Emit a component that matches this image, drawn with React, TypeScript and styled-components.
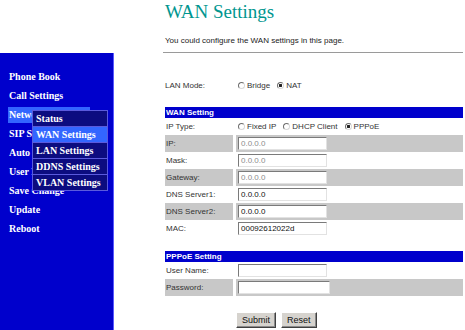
import styled, { createGlobalStyle } from 'styled-components';

const GlobalStyle = createGlobalStyle`
  body {
    margin: 0;
    background: #ffffff;
    font-family: "Liberation Sans", Arial, sans-serif;
  }
`;

const Page = styled.div`
  display: grid;
  grid-template-columns: 114px 1fr;
  width: 465px;
  height: 330px;
  overflow: hidden;
`;

const Sidebar = styled.nav`
  position: relative;
  margin-top: 53px;
  background: #0000cc;
  border-right: 1px solid #5a5aff;
  padding-top: 16px;
  font-family: "Liberation Serif", "Times New Roman", serif;
  font-weight: bold;
  font-size: 10px;
  color: #ffffff;
`;

const MenuItem = styled.div<{ $active?: boolean }>`
  width: 81px;
  height: 16px;
  line-height: 16px;
  margin: 0 0 3px 8px;
  padding-left: 1px;
  white-space: nowrap;
  overflow: hidden;
  background: ${(p) => (p.$active ? '#3366ff' : 'transparent')};
`;

const Dropdown = styled.div`
  position: absolute;
  left: 32px;
  top: 57px;
  width: 74px;
  background: #0c0c80;
  border: 1px solid #5a5add;
`;

const DropItem = styled.div<{ $active?: boolean }>`
  height: 15px;
  line-height: 15px;
  padding-left: 3px;
  border-top: 1px solid #5a5add;
  background: ${(p) => (p.$active ? '#3366ff' : 'transparent')};
  &:first-child {
    border-top: none;
  }
`;

const Main = styled.main`
  padding: 0 2px 0 49px;
  color: #333333;
  font-size: 8px;
`;

const Title = styled.h1`
  margin: 0;
  padding-left: 2px;
  height: 30px;
  line-height: 24px;
  font-family: "Liberation Serif", "Times New Roman", serif;
  font-weight: normal;
  font-size: 19px;
  color: #00968f;
`;

const Intro = styled.p`
  margin: 0;
  padding-left: 2px;
  height: 22px;
  line-height: 22px;
  color: #222222;
`;

const Rule = styled.div`
  border-top: 1px solid #9a9a9a;
  margin-bottom: 24px;
`;

const Section = styled.section<{ $gap?: number }>`
  margin-left: 2px;
  margin-bottom: ${(p) => p.$gap ?? 0}px;
`;

const ModeRow = styled.div`
  display: grid;
  grid-template-columns: 71px 1fr;
  align-items: center;
  height: 16px;
`;

const Bar = styled.div`
  height: 11px;
  line-height: 11px;
  background: #0000cc;
  color: #ffffff;
  font-weight: bold;
  padding-left: 1px;
`;

const Row = styled.div<{ $shade?: boolean; $h?: number }>`
  display: grid;
  grid-template-columns: 68px 1fr;
  column-gap: 3px;
  height: ${(p) => p.$h ?? 17}px;
  align-items: stretch;
`;

const Label = styled.div<{ $shade?: boolean }>`
  display: flex;
  align-items: center;
  padding-left: 1px;
  background: ${(p) => (p.$shade ? '#c8c8c8' : 'transparent')};
`;

const Cell = styled.div<{ $shade?: boolean }>`
  display: flex;
  align-items: center;
  gap: 7px;
  padding-left: 2px;
  background: ${(p) => (p.$shade ? '#c8c8c8' : 'transparent')};
`;

const Field = styled.div<{ $w?: number; $dim?: boolean }>`
  box-sizing: border-box;
  width: ${(p) => p.$w ?? 89}px;
  height: 13px;
  line-height: 11px;
  padding-left: 2px;
  background: #ffffff;
  border-style: solid;
  border-width: 1px;
  border-color: #7a7a7a #e2e2e2 #e2e2e2 #7a7a7a;
  color: ${(p) => (p.$dim ? '#8c8c8c' : '#111111')};
`;

const Choice = styled.label`
  display: inline-flex;
  align-items: center;
  gap: 2px;
  color: #333333;
`;

const Dot = styled.span<{ $on?: boolean }>`
  box-sizing: border-box;
  width: 7px;
  height: 7px;
  border-radius: 50%;
  border: 1px solid #6e6e6e;
  border-right-color: #d8d8d8;
  border-bottom-color: #d8d8d8;
  background: ${(p) => (p.$on ? 'radial-gradient(circle, #222 0 1.4px, #fff 1.6px)' : '#ffffff')};
`;

const Buttons = styled.div`
  display: flex;
  gap: 5px;
  margin: 16px 0 0 73px;
`;

const Button = styled.button`
  height: 16px;
  padding: 0 5px;
  font-family: "Liberation Sans", Arial, sans-serif;
  font-size: 9px;
  color: #111111;
  background: #d6d3ce;
  border: 1px solid;
  border-color: #ffffff #404040 #404040 #ffffff;
  box-shadow: inset -1px -1px 0 #8a8a8a;
`;

const Radio = ({ on, text }: { on?: boolean; text: string }) => (
  <Choice>
    <Dot $on={on} />
    {text}
  </Choice>
);

const menu = ['Phone Book', 'Call Settings', 'Network', 'SIP Settings', 'Auto Provision', 'User Manage', 'Save Change', 'Update', 'Reboot'];
const submenu = ['Status', 'WAN Settings', 'LAN Settings', 'DDNS Settings', 'VLAN Settings'];

const wanRows = [
  { label: 'IP:', value: '0.0.0.0', dim: true },
  { label: 'Mask:', value: '0.0.0.0', dim: true },
  { label: 'Gateway:', value: '0.0.0.0', dim: true },
  { label: 'DNS Server1:', value: '0.0.0.0' },
  { label: 'DNS Server2:', value: '0.0.0.0' },
  { label: 'MAC:', value: '00092612022d' },
];

export default function App() {
  return (
    <>
      <GlobalStyle />
      <Page>
        <Sidebar>
          {menu.map((m) => (
            <MenuItem key={m} $active={m === 'Network'}>
              {m}
            </MenuItem>
          ))}
          <Dropdown>
            {submenu.map((s) => (
              <DropItem key={s} $active={s === 'WAN Settings'}>
                {s}
              </DropItem>
            ))}
          </Dropdown>
        </Sidebar>

        <Main>
          <Title>WAN Settings</Title>
          <Intro>You could configure the WAN settings in this page.</Intro>
          <Rule />

          <Section $gap={14}>
            <ModeRow>
              <span>LAN Mode:</span>
              <Cell>
                <Radio text="Bridge" />
                <Radio on text="NAT" />
              </Cell>
            </ModeRow>
          </Section>

          <Section $gap={14}>
            <Bar>WAN Setting</Bar>
            <Row>
              <Label>IP Type:</Label>
              <Cell>
                <Radio text="Fixed IP" />
                <Radio text="DHCP Client" />
                <Radio on text="PPPoE" />
              </Cell>
            </Row>
            {wanRows.map((r, i) => (
              <Row key={r.label}>
                <Label $shade={i % 2 === 0}>{r.label}</Label>
                <Cell $shade={i % 2 === 0}>
                  <Field $dim={r.dim}>{r.value}</Field>
                </Cell>
              </Row>
            ))}
          </Section>

          <Section>
            <Bar>PPPoE Setting</Bar>
            <Row>
              <Label>User Name:</Label>
              <Cell>
                <Field />
              </Cell>
            </Row>
            <Row>
              <Label $shade>Password:</Label>
              <Cell $shade>
                <Field $w={92} />
              </Cell>
            </Row>
          </Section>

          <Buttons>
            <Button>Submit</Button>
            <Button>Reset</Button>
          </Buttons>
        </Main>
      </Page>
    </>
  );
}
